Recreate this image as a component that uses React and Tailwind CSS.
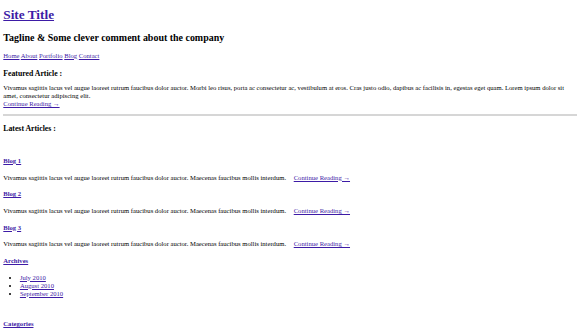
import React from "react";

const link = "text-[#3d1ba6] underline";

const posts = ["Blog 1", "Blog 2", "Blog 3"];
const archives = ["July 2010", "August 2010", "September 2010"];

const lorem =
  "Vivamus sagittis lacus vel augue laoreet rutrum faucibus dolor auctor. Maecenas faucibus mollis interdum.";

export default function App() {
  return (
    <div className="h-[328px] overflow-hidden bg-white px-[3.3px] text-[6.64px] leading-[1.19] text-black [font-family:'Liberation_Serif','Times_New_Roman',serif]">
      <h1 className="mt-[7px] mb-[0.67em] text-[2em] font-bold">
        <a href="#" className={link}>Site Title</a>
      </h1>
      <h2 className="my-[0.83em] text-[1.5em] font-bold">
        Tagline &amp; Some clever comment about the company
      </h2>

      <nav className="my-[1em]">
        <a href="#" className={link}>Home</a>{" "}
        <a href="#" className={link}>About</a>{" "}
        <a href="#" className={link}>Portfolio</a>{" "}
        <a href="#" className={link}>Blog</a>{" "}
        <a href="#" className={link}>Contact</a>
      </nav>

      <h3 className="mt-[1.2em] mb-[0.8em] text-[1.17em] font-bold">Featured Article :</h3>
      <p className="my-[0.9em]">
        Vivamus sagittis lacus vel augue laoreet rutrum faucibus dolor auctor. Morbi leo risus, porta ac
        consectetur ac, vestibulum at eros. Cras justo odio, dapibus ac facilisis in, egestas eget quam.
        Lorem ipsum dolor sit amet, consectetur adipiscing elit.
        <br />
        <a href="#" className={link}>Continue Reading →</a>
      </p>

      <hr className="my-[0.5em] h-[2px] border-0 bg-[#d6d6d6]" />

      <h3 className="my-[1em] text-[1.17em] font-bold">Latest Articles :</h3>

      {posts.map((title, i) => (
        <div key={title}>
          <h4 className={`${i === 0 ? "mt-[23.75px]" : "mt-[1.33em]"} mb-[1.33em] font-bold`}>
            <a href="#" className={link}>{title}</a>
          </h4>
          <p className="my-[1em]">
            {lorem}{" "}
            <a href="#" className={`${link} ml-[6px]`}>Continue Reading →</a>
          </p>
        </div>
      ))}

      <h4 className="my-[1.33em] font-bold">
        <a href="#" className={link}>Archives</a>
      </h4>
      <ul className="my-[1em] list-disc pl-[16.6px]">
        {archives.map((m) => (
          <li key={m}>
            <a href="#" className={link}>{m}</a>
          </li>
        ))}
      </ul>

      <h4 className="mt-[22.5px] mb-[1.33em] font-bold">
        <a href="#" className={link}>Categories</a>
      </h4>
    </div>
  );
}
